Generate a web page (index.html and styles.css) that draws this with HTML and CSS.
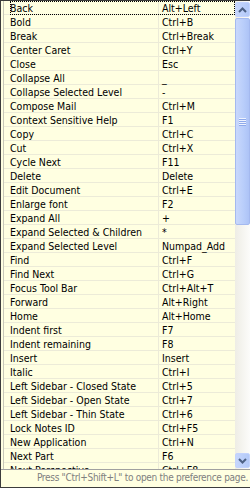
FILE: index.html
```html
<!DOCTYPE html>
<html lang="en">
<head>
  <meta charset="UTF-8" />
  <title>Key Assist</title>
  <link rel="stylesheet" href="styles.css">
</head>
<body>
  <div class="popup">
    <div class="list-area">
      <div class="list">
        <div class="row focused"><span class="cmd">Back</span><span class="key">Alt+Left</span></div>
        <div class="row"><span class="cmd">Bold</span><span class="key">Ctrl+B</span></div>
        <div class="row"><span class="cmd">Break</span><span class="key">Ctrl+Break</span></div>
        <div class="row"><span class="cmd">Center Caret</span><span class="key">Ctrl+Y</span></div>
        <div class="row"><span class="cmd">Close</span><span class="key">Esc</span></div>
        <div class="row"><span class="cmd">Collapse All</span><span class="key">_</span></div>
        <div class="row"><span class="cmd">Collapse Selected Level</span><span class="key">-</span></div>
        <div class="row"><span class="cmd">Compose Mail</span><span class="key">Ctrl+M</span></div>
        <div class="row"><span class="cmd">Context Sensitive Help</span><span class="key">F1</span></div>
        <div class="row"><span class="cmd">Copy</span><span class="key">Ctrl+C</span></div>
        <div class="row"><span class="cmd">Cut</span><span class="key">Ctrl+X</span></div>
        <div class="row"><span class="cmd">Cycle Next</span><span class="key">F11</span></div>
        <div class="row"><span class="cmd">Delete</span><span class="key">Delete</span></div>
        <div class="row"><span class="cmd">Edit Document</span><span class="key">Ctrl+E</span></div>
        <div class="row"><span class="cmd">Enlarge font</span><span class="key">F2</span></div>
        <div class="row"><span class="cmd">Expand All</span><span class="key">+</span></div>
        <div class="row"><span class="cmd">Expand Selected &amp; Children</span><span class="key">*</span></div>
        <div class="row"><span class="cmd">Expand Selected Level</span><span class="key">Numpad_Add</span></div>
        <div class="row"><span class="cmd">Find</span><span class="key">Ctrl+F</span></div>
        <div class="row"><span class="cmd">Find Next</span><span class="key">Ctrl+G</span></div>
        <div class="row"><span class="cmd">Focus Tool Bar</span><span class="key">Ctrl+Alt+T</span></div>
        <div class="row"><span class="cmd">Forward</span><span class="key">Alt+Right</span></div>
        <div class="row"><span class="cmd">Home</span><span class="key">Alt+Home</span></div>
        <div class="row"><span class="cmd">Indent first</span><span class="key">F7</span></div>
        <div class="row"><span class="cmd">Indent remaining</span><span class="key">F8</span></div>
        <div class="row"><span class="cmd">Insert</span><span class="key">Insert</span></div>
        <div class="row"><span class="cmd">Italic</span><span class="key">Ctrl+I</span></div>
        <div class="row"><span class="cmd">Left Sidebar - Closed State</span><span class="key">Ctrl+5</span></div>
        <div class="row"><span class="cmd">Left Sidebar - Open State</span><span class="key">Ctrl+7</span></div>
        <div class="row"><span class="cmd">Left Sidebar - Thin State</span><span class="key">Ctrl+6</span></div>
        <div class="row"><span class="cmd">Lock Notes ID</span><span class="key">Ctrl+F5</span></div>
        <div class="row"><span class="cmd">New Application</span><span class="key">Ctrl+N</span></div>
        <div class="row"><span class="cmd">Next Part</span><span class="key">F6</span></div>
        <div class="row"><span class="cmd">Next Perspective</span><span class="key">Ctrl+F8</span></div>
      </div>

      <!-- XP style scrollbar -->
      <div class="scrollbar">
        <div class="sb-btn">
          <svg width="9" height="6" viewBox="0 0 9 6"><path d="M1 5 L4.5 1.5 L8 5" fill="none" stroke="#4d6185" stroke-width="2"/></svg>
        </div>
        <div class="sb-thumb">
          <span class="grip"></span><span class="grip"></span><span class="grip"></span><span class="grip"></span>
        </div>
        <div class="sb-track"></div>
        <div class="sb-btn">
          <svg width="9" height="6" viewBox="0 0 9 6"><path d="M1 1 L4.5 4.5 L8 1" fill="none" stroke="#4d6185" stroke-width="2"/></svg>
        </div>
      </div>
    </div>

    <div class="status">Press "Ctrl+Shift+L" to open the preference page.</div>
  </div>
</body>
</html>
```

FILE: styles.css
```css
* {
  box-sizing: border-box;
}
html, body {
  margin: 0;
  padding: 0;
  background: #fff;
  font-family: Tahoma, "DejaVu Sans Condensed", "Liberation Sans", sans-serif;
  font-size: 11px;
  color: #000;
}

.popup {
  width: 250px;
  height: 488px;
  background: #ffffe1;
  border: 1px solid #3c3c3c;
  border-right: none;
  display: flex;
  flex-direction: column;
  box-shadow: 0 2px 2px rgba(0 0 0 / 0.25);
}

.list-area {
  flex: 1;
  display: flex;
  min-height: 0;
  padding-left: 2px;
  border-bottom: 1px solid #a0a0a0;
}

.list {
  flex: 1;
  overflow: hidden;
  border-left: 1px solid #c8c8b8;
}

.row {
  position: relative;
  display: flex;
  height: 14px;
  border-bottom: 1px solid #ecebd8;
  line-height: 14px;
  font-size: 10.5px;
}
.row .cmd {
  width: 155px;
  padding-left: 6px;
  white-space: nowrap;
  overflow: hidden;
  border-right: 1px solid #ecebd8;
}
.row .key {
  flex: 1;
  padding-left: 3px;
  white-space: nowrap;
}
/* keyboard focus rectangle on the first entry */
.row.focused::after {
  content: "";
  position: absolute;
  top: 0; bottom: -1px; left: 6px; right: 0;
  border: 1px dotted #000;
  pointer-events: none;
}

/* scrollbar */
.scrollbar {
  width: 15px;
  display: flex;
  flex-direction: column;
  background: linear-gradient(to right, #eeede5, #fcfcfa);
}
.sb-btn {
  height: 15px;
  margin: 1px 0;
  border: 1px solid #c3d3fd;
  border-radius: 2px;
  background: linear-gradient(to right, #c6d6fc, #b3c9f8);
  display: flex;
  align-items: center;
  justify-content: center;
}
.sb-thumb {
  height: 207px;
  border: 1px solid #a4b9ef;
  border-radius: 2px;
  background: linear-gradient(to right, #c9d8fc, #b8cdfa 60%, #adc3f6);
  display: flex;
  flex-direction: column;
  align-items: center;
  justify-content: center;
  gap: 1px;
}
.grip {
  width: 7px;
  height: 1px;
  background: #eef3ff;
  box-shadow: 0 1px 0 #8faaea;
}
.sb-track {
  flex: 1;
}

.status {
  height: 17px;
  line-height: 16px;
  text-align: right;
  color: #808080;
  font-size: 10px;
  letter-spacing: -0.3px;
  padding-right: 2px;
  white-space: nowrap;
  overflow: hidden;
}
```
